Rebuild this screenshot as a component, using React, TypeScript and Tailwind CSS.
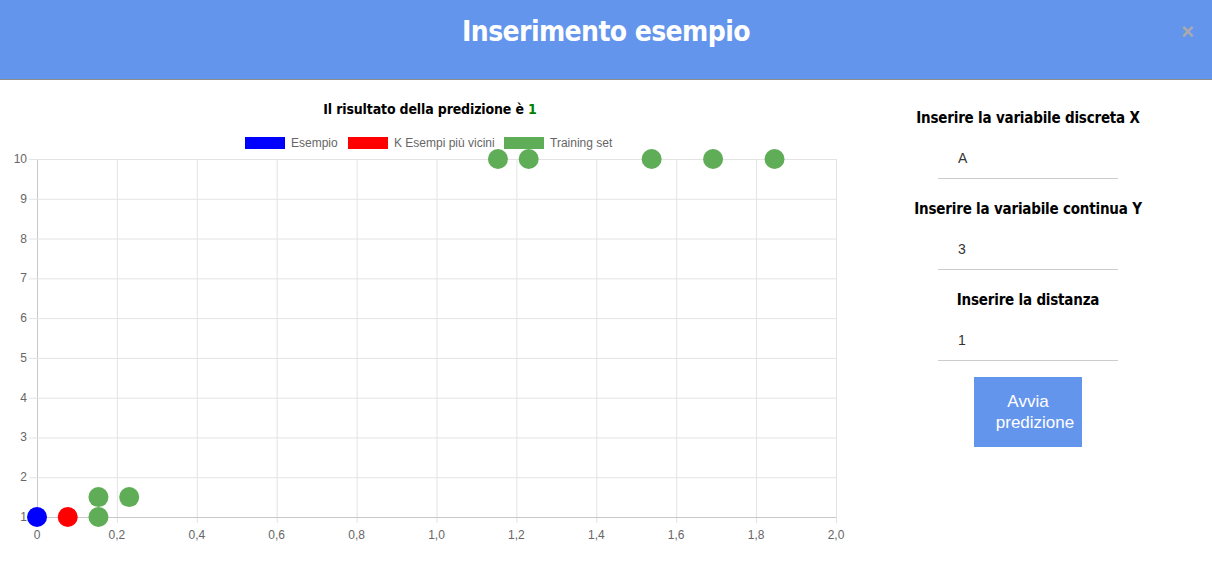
import React from 'react';

const PLOT_LEFT = 37;
const PLOT_RIGHT = 836;
const PLOT_TOP = 39;
const PLOT_BOTTOM = 397;

const xAt = (v: number) => PLOT_LEFT + (v / 2) * (PLOT_RIGHT - PLOT_LEFT);
const yAt = (v: number) => PLOT_BOTTOM - ((v - 1) / 9) * (PLOT_BOTTOM - PLOT_TOP);

const xTicks = [0, 0.2, 0.4, 0.6, 0.8, 1.0, 1.2, 1.4, 1.6, 1.8, 2.0];
const yTicks = [1, 2, 3, 4, 5, 6, 7, 8, 9, 10];

const training: [number, number][] = [
  [2 / 13, 1],
  [2 / 13, 1.5],
  [3 / 13, 1.5],
  [15 / 13, 10],
  [16 / 13, 10],
  [20 / 13, 10],
  [22 / 13, 10],
  [24 / 13, 10],
];

function ScatterChart() {
  return (
    <svg width={860} height={444} className="block" style={{ fontFamily: 'Liberation Sans, Arial, sans-serif' }}>
      {/* Legend */}
      <rect x={245} y={17} width={40} height={12} fill="#0000ff" />
      <text x={291} y={27} fontSize={12} fill="#666">Esempio</text>
      <rect x={348} y={17} width={40} height={12} fill="#ff0000" />
      <text x={394} y={27} fontSize={12} fill="#666">K Esempi più vicini</text>
      <rect x={504} y={17} width={40} height={12} fill="#5fad56" />
      <text x={550} y={27} fontSize={12} fill="#666">Training set</text>

      {/* Grid */}
      {xTicks.map((t) => (
        <line key={'gx' + t} x1={xAt(t) + 0.5} x2={xAt(t) + 0.5} y1={PLOT_TOP} y2={PLOT_BOTTOM + 6} stroke={t === 0 ? '#c8c8c8' : '#e3e3e3'} />
      ))}
      {yTicks.map((t) => (
        <line key={'gy' + t} x1={PLOT_LEFT - 8} x2={PLOT_RIGHT} y1={yAt(t) + 0.5} y2={yAt(t) + 0.5} stroke={t === 1 ? '#c8c8c8' : '#e3e3e3'} />
      ))}

      {/* Axis labels */}
      {yTicks.map((t) => (
        <text key={'ly' + t} x={PLOT_LEFT - 10} y={yAt(t) + 4} fontSize={12} fill="#666" textAnchor="end">{t}</text>
      ))}
      {xTicks.map((t) => (
        <text key={'lx' + t} x={xAt(t)} y={PLOT_BOTTOM + 22} fontSize={12} fill="#666" textAnchor="middle">
          {t === 0 ? '0' : t.toFixed(1).replace('.', ',')}
        </text>
      ))}

      {/* Points */}
      {training.map(([x, y], i) => (
        <circle key={i} cx={xAt(x)} cy={yAt(y)} r={10} fill="#5fad56" />
      ))}
      <circle cx={xAt(1 / 13)} cy={yAt(1)} r={10} fill="#ff0000" />
      <circle cx={xAt(0)} cy={yAt(1)} r={10} fill="#0000ff" />
    </svg>
  );
}

function Field({ label, value }: { label: string; value: string }) {
  return (
    <div className="flex flex-col items-center">
      <label className="text-[15px] leading-[20px] tracking-[-0.2px] font-bold text-black font-['DejaVu_Sans_Condensed',sans-serif]">
        {label}
      </label>
      <input
        readOnly
        value={value}
        className="w-[180px] h-[51px] pt-[20px] pb-[10px] pl-[20px] border-b border-[#cccccc] text-[14px] leading-[20px] text-[#333] outline-none font-['Liberation_Sans',Arial,sans-serif]"
      />
    </div>
  );
}

export default function App() {
  return (
    <div className="w-[1212px] h-[564px] bg-white overflow-hidden">
      {/* Header */}
      <div className="relative h-[80px] bg-[#6495ed] border-b border-[#8c8c8c] pt-[14px]">
        <h1 className="text-center text-white text-[28px] leading-[36px] tracking-[-0.6px] font-bold font-['DejaVu_Sans_Condensed',sans-serif]">
          Inserimento esempio
        </h1>
        <span className="absolute right-[18px] top-[19px] text-[22px] leading-[26px] font-bold text-[#aaaaaa] font-['Liberation_Sans',Arial,sans-serif]">
          ×
        </span>
      </div>

      <div className="flex">
        {/* Chart column */}
        <div className="w-[860px] flex flex-col">
          <div className="pt-[20px] text-center text-[14px] leading-[18px] tracking-[-0.15px] font-bold text-black font-['DejaVu_Sans_Condensed',sans-serif]">
            Il risultato della predizione è <span className="text-[#008000]">1</span>
          </div>
          <div className="mt-[2px]">
            <ScatterChart />
          </div>
        </div>

        {/* Form column */}
        <div className="w-[336px] flex flex-col items-center pt-[28px]">
          <div className="flex flex-col gap-[20px]">
            <Field label="Inserire la variabile discreta X" value="A" />
            <Field label="Inserire la variabile continua Y" value="3" />
            <Field label="Inserire la distanza" value="1" />
          </div>
          <button className="mt-[16px] w-[108px] h-[70px] bg-[#6495ed] text-white text-[17px] leading-[21px] flex flex-col items-center justify-center font-['Liberation_Sans',Arial,sans-serif]">
            <span>Avvia</span>
            <span className="ml-[14px]">predizione</span>
          </button>
        </div>
      </div>
    </div>
  );
}
